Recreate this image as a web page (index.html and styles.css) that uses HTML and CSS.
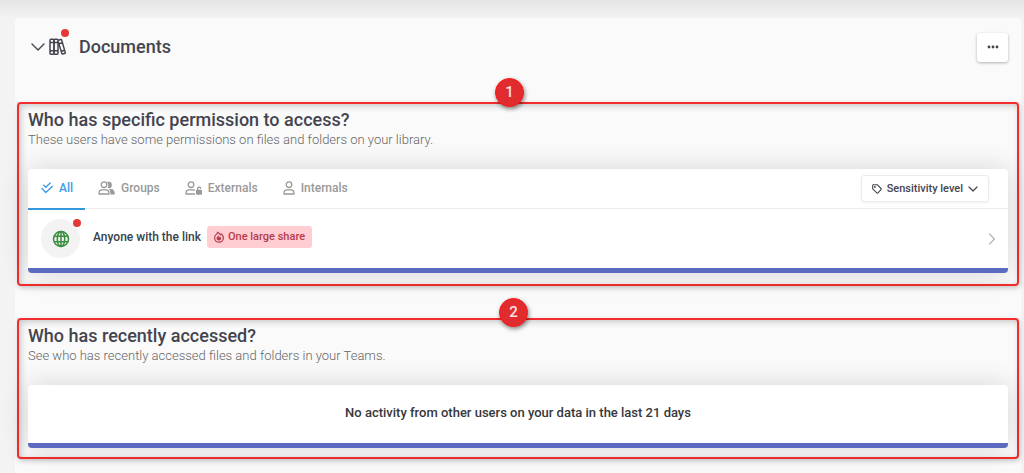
FILE: index.html
```html
<!DOCTYPE html>
<html lang="en">
<head>
<meta charset="utf-8">
<meta name="viewport" content="width=device-width, initial-scale=1">
<title>Documents</title>
<link rel="stylesheet" href="styles.css">
</head>
<body>
<main class="panel">
  <header class="panel-header">
    <button class="toggle" type="button" aria-label="Collapse documents">
      <svg width="14" height="8" viewBox="0 0 14 8" fill="none" stroke="currentColor" stroke-width="1.4" stroke-linecap="round" stroke-linejoin="round"><path d="M1 1l6 6 6-6"/></svg>
    </button>
    <span class="library">
      <svg width="18" height="18" viewBox="0 0 18 18" fill="none" stroke="currentColor" stroke-width="1.5" stroke-linejoin="round"><rect x="1" y="1.2" width="4" height="15" rx="1"/><rect x="5" y="1.2" width="4" height="15" rx="1"/><path d="M1 4.6h8M1 12.800h8"/><path d="M9.400 2.300l2.300-.8q.8-.2 1 .6l3.500 12.300q.2.800-.6 1l-1.800.6q-.8.200-1-.6L9.200 3.500M10.200 5.700l3.300-1.100M12.300 13.300l3.400-1.100"/></svg>
      <span class="dot"></span>
    </span>
    <h1 class="title">Documents</h1>
    <button class="more" type="button" aria-label="More actions">
      <svg width="12" height="4" viewBox="0 0 12 4" fill="currentColor"><circle cx="2" cy="2" r="1.4"/><circle cx="6" cy="2" r="1.4"/><circle cx="10" cy="2" r="1.4"/></svg>
    </button>
  </header>

  <section class="callout">
    <span class="marker">1</span>
    <h2 class="heading">Who has specific permission to access?</h2>
    <p class="subtitle">These users have some permissions on files and folders on your library.</p>
    <div class="card">
      <div class="toolbar">
        <nav class="tabs" aria-label="User types">
          <button class="tab tab-active" type="button">
            <svg width="12" height="12" viewBox="0 0 12 12" fill="none" stroke="currentColor" stroke-width="1.4" stroke-linecap="round" stroke-linejoin="round"><path d="M2.8 3.2l2 2L9.2.9M1 6.6l3.8 4 6.4-6.2"/></svg>
            All
          </button>
          <button class="tab" type="button">
            <svg width="17" height="14" viewBox="0 0 17 14" fill="none" stroke="currentColor" stroke-width="1.3" stroke-linejoin="round"><circle cx="6" cy="3.7" r="2.8"/><path d="M1 13v-.7Q1 8.8 4 8.8h4q3 0 3 3.5v.7z"/><path fill="currentColor" stroke="none" d="M9 1Q13.800 0 13.800 4T9.700 7Q11.300 3.700 9 1zM11 8h2q3.800 0 3.800 5.600H12.500Q12.600 9.500 11 8z"/></svg>
            Groups
          </button>
          <button class="tab" type="button">
            <svg width="17" height="14" viewBox="0 0 17 14" fill="none" stroke="currentColor" stroke-width="1.3" stroke-linejoin="round"><circle cx="6" cy="3.7" r="2.8"/><path d="M10 13H1v-.7Q1 8.800 4 8.800h4q1.200 0 2 .7"/><path d="M12.600 9V7.800q0-1.600 1.600-1.600t1.600 1.600"/><rect x="11" y="8.800" width="6" height="5" rx="1" fill="currentColor" stroke="none"/></svg>
            Externals
          </button>
          <button class="tab" type="button">
            <svg width="12" height="14" viewBox="0 0 12 14" fill="none" stroke="currentColor" stroke-width="1.3" stroke-linejoin="round"><circle cx="6" cy="3.700" r="2.800"/><path d="M1 13v-.7Q1 8.800 4 8.800h4q3 0 3 3.500v.7z"/></svg>
            Internals
          </button>
        </nav>
        <button class="filter" type="button">
          <svg width="10" height="10" viewBox="0 0 10 10" fill="none" stroke="currentColor" stroke-width="1.1" stroke-linejoin="round"><path d="M.7 1.400Q.7.700 1.400.700H5.200L9 4.500Q9.600 5.100 9 5.700L6 8.800Q5.400 9.400 4.800 8.800L.7 4.900z"/><circle cx="2.900" cy="2.900" r=".4" fill="currentColor"/></svg>
          Sensitivity level
          <svg width="10" height="6" viewBox="0 0 10 6" fill="none" stroke="currentColor" stroke-width="1.200" stroke-linecap="round" stroke-linejoin="round"><path d="M1 1l4 4 4-4"/></svg>
        </button>
      </div>
      <a class="row" href="#share">
        <span class="avatar">
          <svg width="18" height="18" viewBox="0 0 18 18" fill="none" stroke="currentColor" stroke-width="1.500"><circle cx="9" cy="9" r="7.500"/><ellipse cx="9" cy="9" rx="3.700" ry="7.500"/><path d="M2 6.300h14M2 11.700h14M9 1.500v15"/></svg>
          <span class="dot"></span>
        </span>
        <span class="share">
          <span>Anyone with the link</span>
          <span class="badge">
            <svg width="10" height="12" viewBox="0 0 10 12" fill="none" stroke="currentColor" stroke-width="1.200" stroke-linejoin="round"><path d="M3.600 1.200Q5.600 2.200 6.300 3.900L7.500 2.900Q9.400 5 9.400 7A4.400 4.200 0 0 1 .6 7Q.6 4.700 2.200 3.400 3.500 2.500 3.600 1.200z"/><path fill="currentColor" stroke-width=".6" d="M4.300 4.800Q4.800 6.500 5.800 6.700L6.800 6.100Q7.600 9.200 5 9.300 2.500 9.200 2.800 7.200 3.200 6.200 4.300 4.800z"/></svg>
            One large share
          </span>
        </span>
        <svg class="row-arrow" width="8" height="12" viewBox="0 0 8 12" fill="none" stroke="currentColor" stroke-width="1.200" stroke-linecap="round" stroke-linejoin="round"><path d="M1.500 1l5 5-5 5"/></svg>
      </a>
    </div>
  </section>

  <section class="callout">
    <span class="marker marker-second">2</span>
    <h2 class="heading">Who has recently accessed?</h2>
    <p class="subtitle">See who has recently accessed files and folders in your Teams.</p>
    <div class="card">
      <p class="empty">No activity from other users on your data in the last 21 days</p>
    </div>
  </section>
</main>
</body>
</html>
```
FILE: styles.css
```css
* {
  box-sizing: border-box;
}

body {
  margin: 0;
  padding: 18px 3px 0 15px;
  min-height: 100vh;
  display: flex;
  background: linear-gradient(#e5e5e5, #f3f3f3 18px);
  font-family: Roboto, "Liberation Sans", sans-serif;
  color: #44444f;
}

button {
  font: inherit;
  color: inherit;
  background: none;
  border: 0;
  padding: 0;
}

h1, h2, p {
  margin: 0;
}

svg {
  display: block;
  flex: none;
}

.panel {
  flex: 1;
  min-width: 0;
  padding: 0 2px 14px;
  background: #fafafa;
  border-radius: 4px 4px 0 0;
}

.panel-header {
  display: flex;
  align-items: center;
  height: 58px;
  margin-bottom: 26px;
  padding: 0 11px 0 14px;
}

.library {
  position: relative;
  margin: 0 12px 0 4px;
}

.dot {
  position: absolute;
  top: -9px;
  right: -2px;
  width: 8px;
  height: 8px;
  border-radius: 50%;
  background: #e53935;
}

.title {
  font-size: 18px;
  line-height: 24px;
  font-weight: 500;
}

.more {
  display: grid;
  place-items: center;
  width: 31px;
  height: 29px;
  margin-left: auto;
  background: #fff;
  border-radius: 3px;
  box-shadow: 0 1px 3px rgba(0, 0, 0, 0.3);
}

.callout {
  position: relative;
  margin-bottom: 32px;
  padding: 5px 9px 11px;
  border: 2px solid #f32d2d;
  border-radius: 4px;
  box-shadow: 1px 2px 5px rgba(0, 0, 0, 0.2), inset 2px 2px 6px rgba(0, 0, 0, 0.2);
}

.callout:last-child {
  margin-bottom: 0;
  padding-bottom: 9px;
}

.marker {
  position: absolute;
  top: -26px;
  left: 476px;
  width: 29px;
  height: 29px;
  border: 1px solid #ff1616;
  border-radius: 50%;
  background: #e02c2f;
  box-shadow: 1px 2px 4px rgba(0, 0, 0, 0.45);
  color: #ffe3e3;
  font-size: 15px;
  line-height: 27px;
  font-weight: 500;
  text-align: center;
}

.marker-second {
  top: -22px;
  left: 480px;
}

.heading {
  font-size: 18px;
  line-height: 22px;
  font-weight: 500;
}

.subtitle {
  margin-bottom: 20px;
  font-size: 13px;
  line-height: 18px;
  font-weight: 300;
  color: #666;
}

.card {
  background: #fff;
  border-bottom: 5px solid #5c6bc0;
  border-radius: 4px;
  box-shadow: 0 0 28px rgba(0, 0, 0, 0.15);
}

.toolbar {
  display: flex;
  align-items: center;
  justify-content: space-between;
  padding-right: 19px;
  border-bottom: 1px solid #ececec;
}

.tabs {
  display: flex;
  margin-bottom: -2px;
}

.tab {
  display: flex;
  align-items: center;
  gap: 6px;
  height: 41px;
  padding: 0 12px 2px 13px;
  border-bottom: 2px solid transparent;
  font-size: 12px;
  font-weight: 500;
  color: #999;
}

.tab-active {
  border-color: #3498db;
  color: #429be0;
}

.filter {
  display: flex;
  align-items: center;
  gap: 5px;
  height: 27px;
  padding: 0 10px;
  border: 1px solid #ececec;
  border-radius: 3px;
  box-shadow: 0 1px 3px rgba(0, 0, 0, 0.06);
  font-size: 11px;
  font-weight: 500;
}

.row {
  display: flex;
  align-items: center;
  height: 59px;
  padding: 0 12px 0 13px;
  color: #37424a;
  text-decoration: none;
  font-size: 12px;
  font-weight: 500;
}

.avatar {
  position: relative;
  display: grid;
  place-items: center;
  width: 39px;
  height: 39px;
  margin-right: 13px;
  border-radius: 50%;
  background: #f3f3f3;
  color: #388e3c;
}

.avatar .dot {
  top: 0;
  right: -1px;
}

.share {
  display: flex;
  align-items: center;
  gap: 6px;
  padding-bottom: 4px;
}

.badge {
  display: flex;
  align-items: center;
  gap: 4px;
  height: 22px;
  padding: 0 7px;
  border-radius: 3px;
  background: #ffcdd2;
  color: #b53c4b;
  font-size: 11px;
}

.row-arrow {
  margin-left: auto;
  color: #b5b5b5;
}

.empty {
  padding: 18px 16px 20px;
  font-size: 13px;
  line-height: 20px;
  font-weight: 500;
  text-align: center;
  color: #37373b;
}
```
